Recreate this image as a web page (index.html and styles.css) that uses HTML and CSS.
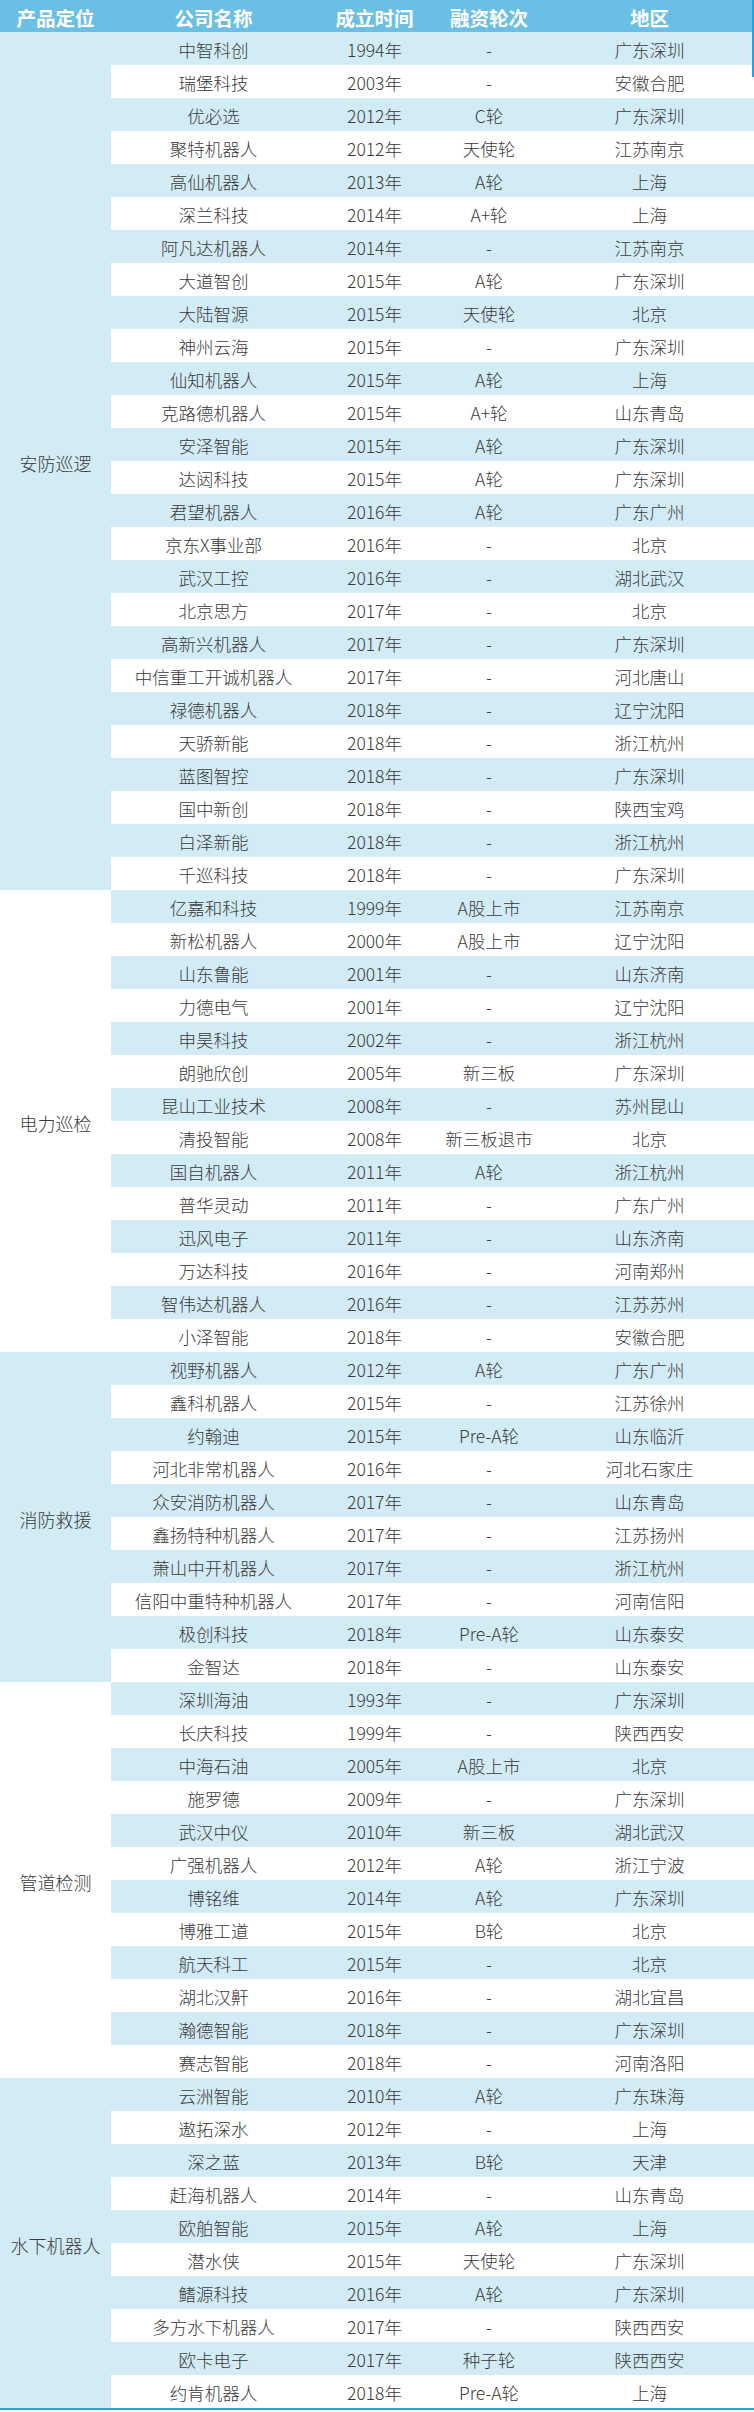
FILE: index.html
```html
<!DOCTYPE html>
<html lang="zh-CN">
<head>
<meta charset="utf-8">
<title>巡检机器人公司</title>
<link rel="stylesheet" href="styles.css">
</head>
<body>
<div class="wrap">
<table class="grid">
<colgroup>
<col class="c-cat"><col class="c-name"><col class="c-year"><col class="c-fund"><col class="c-area">
</colgroup>
<thead>
<tr><th>产品定位</th><th>公司名称</th><th>成立时间</th><th>融资轮次</th><th>地区</th></tr>
</thead>
<tbody>
<tr class="b"><td class="cat b" rowspan="26">安防巡逻</td><td>中智科创</td><td>1994年</td><td>-</td><td>广东深圳</td></tr>
<tr><td>瑞堡科技</td><td>2003年</td><td>-</td><td>安徽合肥</td></tr>
<tr class="b"><td>优必选</td><td>2012年</td><td>C轮</td><td>广东深圳</td></tr>
<tr><td>聚特机器人</td><td>2012年</td><td>天使轮</td><td>江苏南京</td></tr>
<tr class="b"><td>高仙机器人</td><td>2013年</td><td>A轮</td><td>上海</td></tr>
<tr><td>深兰科技</td><td>2014年</td><td>A+轮</td><td>上海</td></tr>
<tr class="b"><td>阿凡达机器人</td><td>2014年</td><td>-</td><td>江苏南京</td></tr>
<tr><td>大道智创</td><td>2015年</td><td>A轮</td><td>广东深圳</td></tr>
<tr class="b"><td>大陆智源</td><td>2015年</td><td>天使轮</td><td>北京</td></tr>
<tr><td>神州云海</td><td>2015年</td><td>-</td><td>广东深圳</td></tr>
<tr class="b"><td>仙知机器人</td><td>2015年</td><td>A轮</td><td>上海</td></tr>
<tr><td>克路德机器人</td><td>2015年</td><td>A+轮</td><td>山东青岛</td></tr>
<tr class="b"><td>安泽智能</td><td>2015年</td><td>A轮</td><td>广东深圳</td></tr>
<tr><td>达闼科技</td><td>2015年</td><td>A轮</td><td>广东深圳</td></tr>
<tr class="b"><td>君望机器人</td><td>2016年</td><td>A轮</td><td>广东广州</td></tr>
<tr><td>京东X事业部</td><td>2016年</td><td>-</td><td>北京</td></tr>
<tr class="b"><td>武汉工控</td><td>2016年</td><td>-</td><td>湖北武汉</td></tr>
<tr><td>北京思方</td><td>2017年</td><td>-</td><td>北京</td></tr>
<tr class="b"><td>高新兴机器人</td><td>2017年</td><td>-</td><td>广东深圳</td></tr>
<tr><td>中信重工开诚机器人</td><td>2017年</td><td>-</td><td>河北唐山</td></tr>
<tr class="b"><td>禄德机器人</td><td>2018年</td><td>-</td><td>辽宁沈阳</td></tr>
<tr><td>天骄新能</td><td>2018年</td><td>-</td><td>浙江杭州</td></tr>
<tr class="b"><td>蓝图智控</td><td>2018年</td><td>-</td><td>广东深圳</td></tr>
<tr><td>国中新创</td><td>2018年</td><td>-</td><td>陕西宝鸡</td></tr>
<tr class="b"><td>白泽新能</td><td>2018年</td><td>-</td><td>浙江杭州</td></tr>
<tr><td>千巡科技</td><td>2018年</td><td>-</td><td>广东深圳</td></tr>

<tr class="b"><td class="cat w" rowspan="14">电力巡检</td><td>亿嘉和科技</td><td>1999年</td><td>A股上市</td><td>江苏南京</td></tr>
<tr><td>新松机器人</td><td>2000年</td><td>A股上市</td><td>辽宁沈阳</td></tr>
<tr class="b"><td>山东鲁能</td><td>2001年</td><td>-</td><td>山东济南</td></tr>
<tr><td>力德电气</td><td>2001年</td><td>-</td><td>辽宁沈阳</td></tr>
<tr class="b"><td>申昊科技</td><td>2002年</td><td>-</td><td>浙江杭州</td></tr>
<tr><td>朗驰欣创</td><td>2005年</td><td>新三板</td><td>广东深圳</td></tr>
<tr class="b"><td>昆山工业技术</td><td>2008年</td><td>-</td><td>苏州昆山</td></tr>
<tr><td>清投智能</td><td>2008年</td><td>新三板退市</td><td>北京</td></tr>
<tr class="b"><td>国自机器人</td><td>2011年</td><td>A轮</td><td>浙江杭州</td></tr>
<tr><td>普华灵动</td><td>2011年</td><td>-</td><td>广东广州</td></tr>
<tr class="b"><td>迅风电子</td><td>2011年</td><td>-</td><td>山东济南</td></tr>
<tr><td>万达科技</td><td>2016年</td><td>-</td><td>河南郑州</td></tr>
<tr class="b"><td>智伟达机器人</td><td>2016年</td><td>-</td><td>江苏苏州</td></tr>
<tr><td>小泽智能</td><td>2018年</td><td>-</td><td>安徽合肥</td></tr>

<tr class="b"><td class="cat b" rowspan="10">消防救援</td><td>视野机器人</td><td>2012年</td><td>A轮</td><td>广东广州</td></tr>
<tr><td>鑫科机器人</td><td>2015年</td><td>-</td><td>江苏徐州</td></tr>
<tr class="b"><td>约翰迪</td><td>2015年</td><td>Pre-A轮</td><td>山东临沂</td></tr>
<tr><td>河北非常机器人</td><td>2016年</td><td>-</td><td>河北石家庄</td></tr>
<tr class="b"><td>众安消防机器人</td><td>2017年</td><td>-</td><td>山东青岛</td></tr>
<tr><td>鑫扬特种机器人</td><td>2017年</td><td>-</td><td>江苏扬州</td></tr>
<tr class="b"><td>萧山中开机器人</td><td>2017年</td><td>-</td><td>浙江杭州</td></tr>
<tr><td>信阳中重特种机器人</td><td>2017年</td><td>-</td><td>河南信阳</td></tr>
<tr class="b"><td>极创科技</td><td>2018年</td><td>Pre-A轮</td><td>山东泰安</td></tr>
<tr><td>金智达</td><td>2018年</td><td>-</td><td>山东泰安</td></tr>

<tr class="b"><td class="cat w" rowspan="12">管道检测</td><td>深圳海油</td><td>1993年</td><td>-</td><td>广东深圳</td></tr>
<tr><td>长庆科技</td><td>1999年</td><td>-</td><td>陕西西安</td></tr>
<tr class="b"><td>中海石油</td><td>2005年</td><td>A股上市</td><td>北京</td></tr>
<tr><td>施罗德</td><td>2009年</td><td>-</td><td>广东深圳</td></tr>
<tr class="b"><td>武汉中仪</td><td>2010年</td><td>新三板</td><td>湖北武汉</td></tr>
<tr><td>广强机器人</td><td>2012年</td><td>A轮</td><td>浙江宁波</td></tr>
<tr class="b"><td>博铭维</td><td>2014年</td><td>A轮</td><td>广东深圳</td></tr>
<tr><td>博雅工道</td><td>2015年</td><td>B轮</td><td>北京</td></tr>
<tr class="b"><td>航天科工</td><td>2015年</td><td>-</td><td>北京</td></tr>
<tr><td>湖北汉鼾</td><td>2016年</td><td>-</td><td>湖北宜昌</td></tr>
<tr class="b"><td>瀚德智能</td><td>2018年</td><td>-</td><td>广东深圳</td></tr>
<tr><td>赛志智能</td><td>2018年</td><td>-</td><td>河南洛阳</td></tr>

<tr class="b"><td class="cat b" rowspan="10">水下机器人</td><td>云洲智能</td><td>2010年</td><td>A轮</td><td>广东珠海</td></tr>
<tr><td>遨拓深水</td><td>2012年</td><td>-</td><td>上海</td></tr>
<tr class="b"><td>深之蓝</td><td>2013年</td><td>B轮</td><td>天津</td></tr>
<tr><td>赶海机器人</td><td>2014年</td><td>-</td><td>山东青岛</td></tr>
<tr class="b"><td>欧舶智能</td><td>2015年</td><td>A轮</td><td>上海</td></tr>
<tr><td>潜水侠</td><td>2015年</td><td>天使轮</td><td>广东深圳</td></tr>
<tr class="b"><td>鳍源科技</td><td>2016年</td><td>A轮</td><td>广东深圳</td></tr>
<tr><td>多方水下机器人</td><td>2017年</td><td>-</td><td>陕西西安</td></tr>
<tr class="b"><td>欧卡电子</td><td>2017年</td><td>种子轮</td><td>陕西西安</td></tr>
<tr><td>约肯机器人</td><td>2018年</td><td>Pre-A轮</td><td>上海</td></tr>
</tbody>
</table>
<div class="thumb"></div>
</div>
</body>
</html>
```

FILE: styles.css
```css
html, body {
  margin: 0;
  padding: 0;
  background: #ffffff;
}

.wrap {
  position: relative;
  width: 754px;
}

.grid {
  width: 754px;
  border-collapse: collapse;
  border-spacing: 0;
  table-layout: fixed;
  font-family: "Noto Sans CJK SC", "Noto Sans", sans-serif;
  border-bottom: 2px solid #33a0d2;
}

.c-cat { width: 111px; }
.c-name { width: 205px; }
.c-year { width: 117px; }
.c-fund { width: 112px; }
.c-area { width: 209px; }

.grid th {
  height: 32px;
  padding: 3px 0 0;
  box-sizing: border-box;
  background: #6cbfe4;
  color: #ffffff;
  font-weight: 700;
  font-size: 19.5px;
  line-height: 29px;
  text-align: center;
  white-space: nowrap;
}

.grid td {
  height: 33px;
  padding: 3px 0 0;
  box-sizing: border-box;
  color: #3a3a3a;
  font-weight: 300;
  font-size: 17.5px;
  line-height: 30px;
  text-align: center;
  white-space: nowrap;
}

.grid tr.b td {
  background: #d2ebf5;
}

.grid td.cat {
  font-size: 18px;
  vertical-align: middle;
}

.grid td.cat.b { background: #d2ebf5; }
.grid td.cat.w { background: #ffffff; }

.thumb {
  position: absolute;
  top: 0;
  right: 0;
  width: 2px;
  height: 77px;
  background: #2a9fd8;
}
```
